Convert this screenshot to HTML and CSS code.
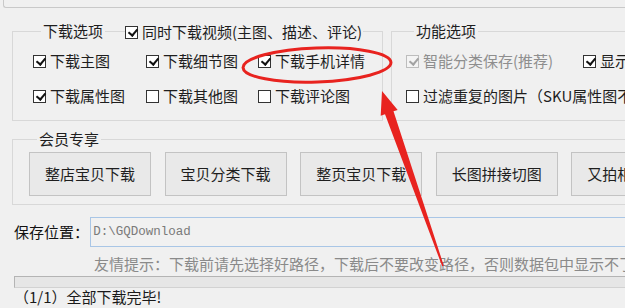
FILE: index.html
```html
<!DOCTYPE html>
<html lang="zh-CN">
<head>
<meta charset="utf-8">
<title>下载设置</title>
<link rel="stylesheet" href="styles.css">
</head>
<body>
<div class="topbar"></div>

<div class="options">
  <fieldset class="group group-dl">
    <legend>下载选项</legend>
    <label class="cb cb-legend"><span class="box on"></span>同时下载视频(主图、描述、评论)</label>
    <div class="grid grid-dl">
      <label class="cb"><span class="box on"></span>下载主图</label>
      <label class="cb"><span class="box on"></span>下载细节图</label>
      <label class="cb"><span class="box on"></span>下载手机详情</label>
      <label class="cb"><span class="box on"></span>下载属性图</label>
      <label class="cb"><span class="box"></span>下载其他图</label>
      <label class="cb"><span class="box"></span>下载评论图</label>
    </div>
  </fieldset>
  <fieldset class="group group-fn">
    <legend>功能选项</legend>
    <div class="grid grid-fn">
      <label class="cb disabled"><span class="box on"></span>智能分类保存(推荐)</label>
      <label class="cb"><span class="box on"></span>显示下载日志</label>
      <label class="cb wide"><span class="box"></span>过滤重复的图片（SKU属性图不过滤）</label>
    </div>
  </fieldset>
</div>

<fieldset class="group group-vip">
  <legend>会员专享</legend>
  <div class="buttons">
    <button class="btn">整店宝贝下载</button>
    <button class="btn">宝贝分类下载</button>
    <button class="btn">整页宝贝下载</button>
    <button class="btn">长图拼接切图</button>
    <button class="btn">又拍相册下载</button>
  </div>
</fieldset>

<div class="save-row">
  <span class="save-label">保存位置：</span>
  <div class="path-input">D:\GQDownload</div>
</div>
<div class="hint">友情提示：下载前请先选择好路径，下载后不要改变路径，否则数据包中显示不了图片</div>
<div class="progress"></div>
<div class="status">（1/1）全部下载完毕!</div>

<svg class="mark" width="625" height="308" viewBox="0 0 625 308">
  <ellipse cx="317" cy="65" rx="74" ry="17" transform="rotate(-2 317 65)" fill="none" stroke="#e8231f" stroke-width="3"/>
  <polygon points="382,91 397.7,109.9 393.5,111.3 443.8,265.7 442.2,266.3 385,114.3 380.7,115.8" fill="#e8231f"/>
</svg>
</body>
</html>
```
FILE: styles.css
```css
* { box-sizing: border-box; }

html, body {
  margin: 0;
  padding: 0;
}

body {
  width: 625px;
  height: 308px;
  overflow: hidden;
  position: relative;
  background: #f0f0f0;
  color: #1e1e1e;
  font-family: "Noto Sans CJK SC", "Noto Sans", sans-serif;
  font-size: 15px;
  line-height: 18px;
}

.topbar {
  height: 8px;
  width: 660px;
  margin-left: 3px;
  border-left: 1px solid #c9c9c9;
  border-bottom: 1px solid #c9c9c9;
  border-bottom-left-radius: 3px;
}

.options {
  display: flex;
  gap: 8px;
  margin: 14px 0 0 12px;
  width: 720px;
}

.group {
  position: relative;
  margin: 0;
  min-width: 0;
  border: 1px solid #d8d8d8;
  padding: 0;
}

.group legend {
  margin-left: 8px;
  padding: 0 2px;
  line-height: 18px;
}

.group-dl {
  width: 371px;
  padding: 11px 0 14px 20px;
}

.group-fn {
  width: 320px;
  padding: 11px 0 14px 14px;
}

.grid {
  display: grid;
  grid-auto-rows: 20px;
  row-gap: 15px;
}

.grid-dl { grid-template-columns: 113px 112px 113px; }
.grid-fn { grid-template-columns: 177px 140px; }
.grid-fn .wide { grid-column: 1 / 3; }

.cb {
  display: flex;
  align-items: center;
  gap: 4px;
  white-space: nowrap;
}

.cb-legend {
  position: absolute;
  left: 112px;
  top: -17px;
  height: 18px;
  padding-right: 1px;
  background: #f0f0f0;
}

.box {
  flex: none;
  width: 13px;
  height: 13px;
  border: 1px solid #333;
  background: #fff;
  position: relative;
}

.box.on::after {
  content: "";
  position: absolute;
  left: 3.5px;
  top: 0;
  width: 4px;
  height: 7px;
  border-right: 2px solid #111;
  border-bottom: 2px solid #111;
  transform: rotate(40deg);
  transform-origin: 50% 50%;
}

.disabled { color: #8e8e8e; }
.disabled .box { border-color: #bdbdbd; background: #f4f4f4; }
.disabled .box.on::after { border-color: #a3a3a3; }

.group-vip {
  width: 700px;
  margin: 9px 0 0 12px;
  padding: 4px 0 8px 16px;
}

.buttons {
  display: flex;
  gap: 13.6px;
}

.btn {
  flex: none;
  width: 122px;
  height: 44px;
  margin: 0;
  padding: 0;
  background: #e9e9e9;
  border: 1px solid #c3c3c3;
  font: inherit;
  color: #1e1e1e;
  white-space: nowrap;
}

.save-row {
  display: flex;
  align-items: center;
  margin: 12px 0 0 14px;
}

.save-label {
  width: 80px;
  color: #111;
}

.path-input {
  width: 560px;
  height: 30px;
  border: 1px solid #a9c6e6;
  border-right: none;
  padding-left: 2px;
  display: flex;
  align-items: center;
  font-family: "Liberation Mono", monospace;
  font-size: 12.5px;
  color: #7a7a7a;
  background: #f1f1f1;
}

.hint {
  margin: 8px 0 0 94px;
  color: #8a8a8a;
  white-space: nowrap;
}

.progress {
  margin: 3px 0 0 14px;
  width: 640px;
  height: 12px;
  border: 1px solid #b4b4b4;
  border-bottom-color: #d2d2d2;
  background: #e6e6e6;
}

.status {
  margin: 0 0 0 14px;
  color: #1a1a1a;
}

.mark {
  position: absolute;
  left: 0;
  top: 0;
  pointer-events: none;
}
```
